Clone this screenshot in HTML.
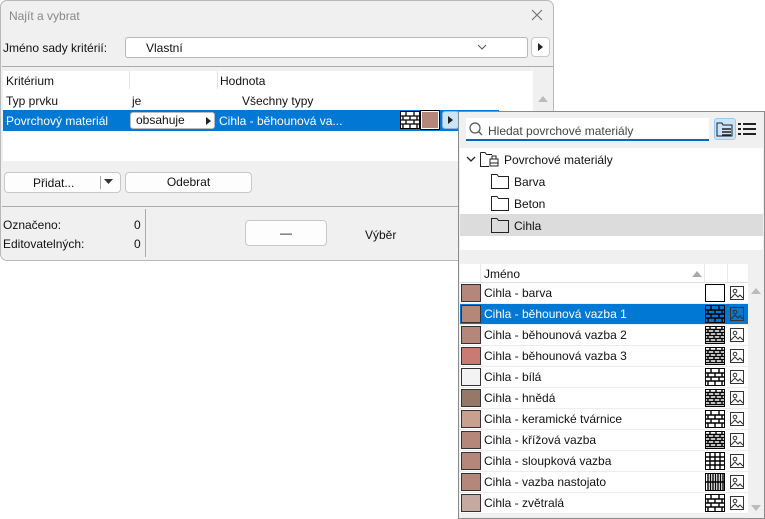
<!DOCTYPE html>
<html><head><meta charset="utf-8"><style>
*{box-sizing:border-box;margin:0;padding:0}
body{width:765px;height:519px;background:#fff;font-family:"Liberation Sans",sans-serif;font-size:12px;color:#111;position:relative;overflow:hidden}
.a{position:absolute}
.dlg{left:0;top:0;width:554px;height:261px;background:#f0f0f0;border:1px solid #b8b8b8;border-radius:7px}
.btn{position:absolute;background:#fdfdfd;border:1px solid #c8c8c8;border-radius:4px;text-align:center;line-height:18px}
.pop{left:458px;top:111px;width:307px;height:408px;border:1px solid #8a8a8a;background:#f0f0f0}
.row{position:absolute;left:460px;width:288px;height:21px;background:#fff;border-bottom:1px solid #ececec}
.row .sw{position:absolute;left:1px;top:1px;width:20px;height:18px;border:1px solid #333}
.row .t{position:absolute;left:24px;top:3px}
.row svg{position:absolute}
.sel{background:#0078d4;color:#fff}
</style></head><body>
<div class="a dlg"></div>
<div class="a" style="left:9px;top:9px;color:#888;font-size:12px">Najít a vybrat</div>
<svg class="a" style="left:531px;top:9px" width="12" height="12"><path d="M1 1L11 11M11 1L1 11" stroke="#777" stroke-width="1.2"/></svg>
<div class="a" style="left:3px;top:41px">Jméno sady kritérií:</div>
<div class="a" style="left:125px;top:37px;width:403px;height:21px;background:#fff;border:1px solid #b8b8b8;border-radius:3px"></div>
<div class="a" style="left:146px;top:41px">Vlastní</div>
<svg class="a" style="left:477px;top:44px" width="10" height="6"><path d="M1 1L5 5L9 1" stroke="#555" fill="none"/></svg>
<div class="btn" style="left:531px;top:37px;width:19px;height:20px"></div>
<svg class="a" style="left:538px;top:43px" width="5" height="8"><path d="M0 0L5 4L0 8Z" fill="#222"/></svg>
<div class="a" style="left:2px;top:66px;width:551px;height:1px;background:#aaa"></div>
<div class="a" style="left:3px;top:71px;width:530px;height:90px;background:#fff"></div>
<div class="a" style="left:533px;top:89px;width:20px;height:72px;background:#f0f0f0"></div>
<div class="a" style="left:129px;top:71px;width:1px;height:18px;background:#e2e2e2"></div>
<div class="a" style="left:217px;top:71px;width:1px;height:18px;background:#e2e2e2"></div>
<div class="a" style="left:6px;top:74px">Kritérium</div>
<div class="a" style="left:220px;top:74px">Hodnota</div>
<svg class="a" style="left:538px;top:95px" width="10" height="7"><path d="M0 7L5 1L10 7Z" fill="#bbb"/></svg>
<div class="a" style="left:6px;top:94px">Typ prvku</div>
<div class="a" style="left:132px;top:94px">je</div>
<div class="a" style="left:242px;top:94px">Všechny typy</div>
<div class="a" style="left:3px;top:110px;width:496px;height:21px;background:#0078d4"></div>
<div class="a" style="left:6px;top:114px;color:#fff">Povrchový materiál</div>
<div class="a" style="left:130px;top:112px;width:85px;height:17px;background:#fff;border:1px solid #bbb;border-radius:3px"></div>
<div class="a" style="left:136px;top:113px">obsahuje</div>
<svg class="a" style="left:206px;top:117px" width="5" height="8"><path d="M0 0L5 4L0 8Z" fill="#222"/></svg>
<div class="a" style="left:219px;top:114px;color:#fff">Cihla - běhounová va...</div>
<svg class="a" style="left:400px;top:111px" width="20" height="18"><rect x="0.5" y="0.5" width="19" height="17" fill="#fff" stroke="#000"/><path d="M0 5H20M0 9H20M0 13H20M6 1V5M14 1V5M3 5V9M10 5V9M17 5V9M6 9V13M14 9V13M3 13V17M10 13V17M17 13V17" stroke="#000" stroke-width="1.3"/></svg>
<div class="a" style="left:421px;top:111px;width:18px;height:18px;border:1px solid #fff;outline:1px solid #000;background:#b4877a"></div>
<div class="a" style="left:442px;top:111px;width:17px;height:18px;background:#cde4f7;border:1px solid #8cb8e0;border-radius:3px"></div>
<svg class="a" style="left:448px;top:116px" width="5" height="8"><path d="M0 0L5 4L0 8Z" fill="#222"/></svg>
<div class="btn" style="left:4px;top:172px;width:117px;height:21px">
<span style="position:absolute;left:28px;top:1px">Přidat...</span>
<span style="position:absolute;left:95px;top:3px;width:1px;height:13px;background:#aaa"></span></div>
<svg class="a" style="left:104px;top:179px" width="9" height="5"><path d="M0 0H9L4.5 5Z" fill="#333"/></svg>
<div class="btn" style="left:125px;top:172px;width:127px;height:21px">Odebrat</div>
<div class="a" style="left:2px;top:206px;width:456px;height:1px;background:#aaa"></div>
<div class="a" style="left:145px;top:209px;width:1px;height:48px;background:#aaa"></div>
<div class="a" style="left:3px;top:218px">Označeno:</div>
<div class="a" style="left:134px;top:218px">0</div>
<div class="a" style="left:3px;top:237px">Editovatelných:</div>
<div class="a" style="left:134px;top:237px">0</div>
<div class="btn" style="left:245px;top:220px;width:82px;height:26px;line-height:24px">—</div>
<div class="a" style="left:365px;top:228px">Výběr</div>

<div class="a pop"></div>
<div class="a" style="left:466px;top:118px;width:243px;height:23px;background:#fff;border-bottom:2px solid #0067c0"></div>
<svg class="a" style="left:469px;top:122px" width="14" height="14"><circle cx="6" cy="6" r="5" fill="none" stroke="#555" stroke-width="1.2"/><path d="M9.5 9.5L13 13" stroke="#555" stroke-width="1.3"/></svg>
<div class="a" style="left:488px;top:124px;color:#444">Hledat povrchové materiály</div>
<div class="a" style="left:714px;top:118px;width:22px;height:22px;background:#cce4f7;border:1px solid #99c9ef;border-radius:3px"></div>
<svg class="a" style="left:716px;top:121px" width="18" height="16"><path d="M1 2H6L7 4H16V15H1Z" fill="none" stroke="#222"/><path d="M6 8H15M6 11H15M6 14H15" stroke="#222" stroke-width="1.5"/></svg>
<svg class="a" style="left:738px;top:122px" width="18" height="14"><path d="M0 2H3M5 2H18M0 7H3M5 7H18M0 12H3M5 12H18" stroke="#222" stroke-width="2"/></svg>
<div class="a" style="left:460px;top:148px;width:303px;height:102px;background:#fff"></div>
<div class="a" style="left:460px;top:214px;width:303px;height:22px;background:#dcdcdc"></div>
<svg class="a" style="left:466px;top:155px" width="10" height="8"><path d="M1 2L5 6L9 2" stroke="#222" fill="none" stroke-width="1.3"/></svg>
<svg class="a" style="left:480px;top:151px" width="20" height="16"><path d="M0.5 1.5H5L6.5 3.5H12M0.5 1.5V15.5H9" fill="none" stroke="#222"/><path d="M10 8H18V15H10ZM12 8V5H16V8M10 12H18" fill="none" stroke="#222"/></svg>
<div class="a" style="left:504px;top:153px">Povrchové materiály</div>
<svg class="a" style="left:491px;top:174px" width="18" height="15"><path d="M0.5 0.5H6L7.5 2.5H17.5V14.5H0.5Z" fill="none" stroke="#222"/></svg>
<div class="a" style="left:514px;top:175px">Barva</div>
<svg class="a" style="left:491px;top:196px" width="18" height="15"><path d="M0.5 0.5H6L7.5 2.5H17.5V14.5H0.5Z" fill="none" stroke="#222"/></svg>
<div class="a" style="left:514px;top:197px">Beton</div>
<svg class="a" style="left:491px;top:218px" width="18" height="15"><path d="M0.5 0.5H6L7.5 2.5H17.5V14.5H0.5Z" fill="none" stroke="#222"/></svg>
<div class="a" style="left:514px;top:219px">Cihla</div>
<div class="a" style="left:460px;top:264px;width:288px;height:19px;background:#fff;border-bottom:1px solid #ddd"></div>
<div class="a" style="left:480px;top:264px;width:1px;height:19px;background:#e8e8e8"></div>
<div class="a" style="left:704px;top:264px;width:1px;height:19px;background:#e8e8e8"></div>
<div class="a" style="left:727px;top:264px;width:1px;height:19px;background:#e8e8e8"></div>
<div class="a" style="left:484px;top:267px">Jméno</div>
<svg class="a" style="left:692px;top:271px" width="10" height="6"><path d="M0 6L5 0L10 6Z" fill="#aaa"/></svg>
<svg class="a" style="left:751px;top:287px" width="10" height="7"><path d="M0 7L5 1L10 7Z" fill="#bbb"/></svg>
<svg class="a" style="left:751px;top:505px" width="10" height="7"><path d="M0 0L5 6L10 0Z" fill="#bbb"/></svg>

<div id="rows"></div>
<script>
var data=[["Cihla - barva","#b4877a","w"],["Cihla - běhounová vazba 1","#b4877a","c"],["Cihla - běhounová vazba 2","#b4877a","f"],["Cihla - běhounová vazba 3","#c97b73","f"],["Cihla - bílá","#f3f3f3","c"],["Cihla - hnědá","#957868","f"],["Cihla - keramické tvárnice","#c9a08f","c"],["Cihla - křížová vazba","#b4877a","f"],["Cihla - sloupková vazba","#b4877a","s"],["Cihla - vazba nastojato","#b4877a","n"],["Cihla - zvětralá","#c6aaa1","c"]];
function pat(k,col,bg){var p="";
if(k=="c"){p="M0 5H20M0 9H20M0 13H20M6 1V5M14 1V5M3 5V9M10 5V9M17 5V9M6 9V13M14 9V13M3 13V17M10 13V17M17 13V17";}
else if(k=="f"){p="M0 3.5H20M0 6.5H20M0 9.5H20M0 12.5H20M0 15.5H20M5 1V4M11 1V4M17 1V4M3 4V7M9 4V7M15 4V7M5 7V10M11 7V10M17 7V10M3 10V13M9 10V13M15 10V13M5 13V16M11 13V16M17 13V16";}
else if(k=="s"){p="M0 5H20M0 9H20M0 13H20M5 1V17M10 1V17M15 1V17";}
else if(k=="n"){p="M0 9H20M3 1V17M5.5 1V17M8 1V17M10.5 1V17M13 1V17M15.5 1V17M18 1V17";}
return '<svg style="left:245px;top:1px" width="20" height="18"><rect x="0.5" y="0.5" width="19" height="17" fill="'+bg+'" stroke="'+col+'"/><path d="'+p+'" stroke="'+col+'" stroke-width="1.4"/></svg>';}
var h="";data.forEach(function(d,i){var s=i==1;var col="#000",bg=s?"#0078d4":"#fff";
h+='<div class="row'+(s?' sel':'')+'" style="top:'+(283+i*21)+'px"><div class="sw" style="background:'+d[1]+'"></div><div class="t">'+d[0]+'</div>'+pat(d[2],col,bg)+'<svg style="left:270px;top:3px" width="14" height="14"><rect x="0.5" y="0.5" width="13" height="13" fill="none" stroke="#333"/><circle cx="5" cy="5" r="1.8" fill="none" stroke="#333"/><path d="M1 12L5 8L8 11L10 9L13 12" fill="none" stroke="#333"/></svg></div>';});
document.getElementById("rows").innerHTML=h;
</script>
</body></html>
